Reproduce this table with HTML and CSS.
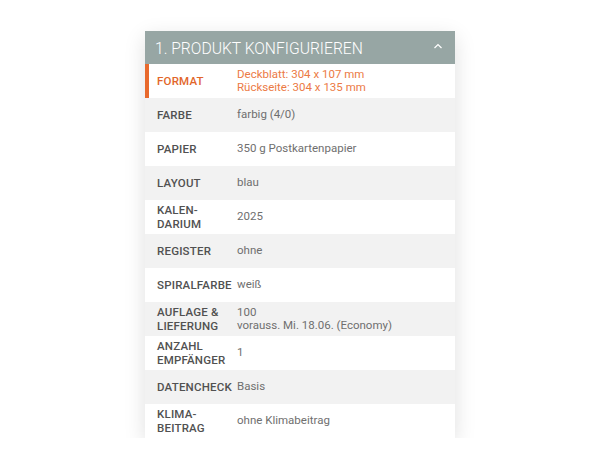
FILE: index.html
```html
<!DOCTYPE html>
<html lang="de">
<head>
<meta charset="utf-8">
<link rel="stylesheet" href="styles.css">
</head>
<body>
<div class="card">
  <div class="head">
    <span class="title">1. PRODUKT KONFIGURIEREN</span>
    <svg class="chev" width="10" height="6" viewBox="0 0 10 6"><path d="M1.5 5 L5 1.6 L8.5 5" fill="none" stroke="#fff" stroke-width="1.3"/></svg>
  </div>
  <div class="row active"><div class="lab">FORMAT</div><div class="val">Deckblatt: 304 x 107 mm<br>Rückseite: 304 x 135 mm</div></div>
  <div class="row alt"><div class="lab">FARBE</div><div class="val">farbig (4/0)</div></div>
  <div class="row"><div class="lab">PAPIER</div><div class="val">350 g Postkartenpapier</div></div>
  <div class="row alt"><div class="lab">LAYOUT</div><div class="val">blau</div></div>
  <div class="row"><div class="lab">KALEN-<br>DARIUM</div><div class="val">2025</div></div>
  <div class="row alt"><div class="lab">REGISTER</div><div class="val">ohne</div></div>
  <div class="row"><div class="lab">SPIRALFARBE</div><div class="val">weiß</div></div>
  <div class="row alt"><div class="lab">AUFLAGE &amp;<br>LIEFERUNG</div><div class="val">100<br>vorauss. Mi. 18.06. (Economy)</div></div>
  <div class="row"><div class="lab">ANZAHL<br>EMPFÄNGER</div><div class="val">1</div></div>
  <div class="row alt"><div class="lab">DATENCHECK</div><div class="val">Basis</div></div>
  <div class="row"><div class="lab">KLIMA-<br>BEITRAG</div><div class="val">ohne Klimabeitrag</div></div>
</div>
</body>
</html>
```
FILE: styles.css
```css
html, body { margin: 0; padding: 0; background: #fff; }
body { font-family: Roboto, "Noto Sans", sans-serif; }
.card {
  width: 310px;
  margin: 31px 0 0 145px;
  background: #fff;
  box-shadow: 0 6px 20px rgba(0,0,0,0.13);
}
.head {
  height: 33px;
  background: #97a6a4;
  display: flex;
  align-items: center;
  justify-content: space-between;
  padding: 0 12px 0 10px;
  box-sizing: border-box;
}
.title {
  color: #fff;
  font-size: 17px;
  font-weight: 300;
  transform: scaleX(0.92);
  transform-origin: left center;
  white-space: nowrap;
}
.chev { margin-top: -3px; }
.row {
  height: 34px;
  display: flex;
  align-items: center;
  padding-left: 12px;
  box-sizing: border-box;
  font-size: 11.5px;
  line-height: 13.5px;
}
.row.alt { background: #f2f2f2; }
.row.active { border-left: 4px solid #e8692c; padding-left: 8px; }
.lab {
  width: 80px;
  flex: none;
  font-weight: 500;
  color: #515151;
  letter-spacing: 0.2px;
  line-height: 14px;
}
.val { color: #6f6f6f; font-weight: 400; }
.active .lab { color: #e2662a; }
.active .val { color: #ec7a45; line-height: 13px; }
```
